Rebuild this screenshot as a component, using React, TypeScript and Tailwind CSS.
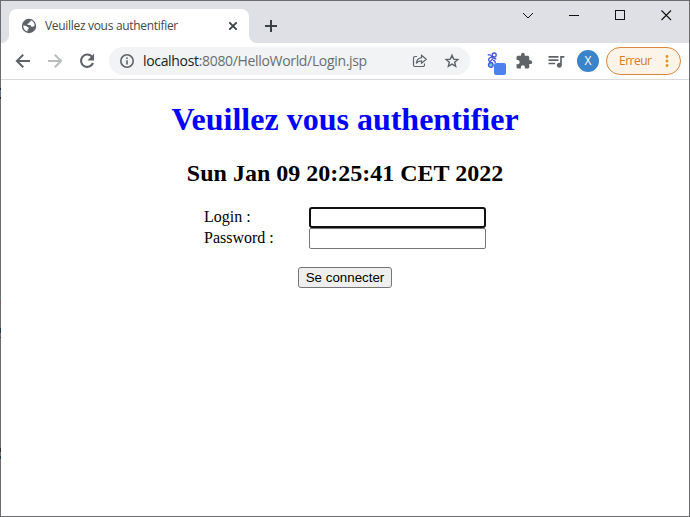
import { MdExtension, MdMoreVert, MdQueueMusic } from "react-icons/md";

function TabStrip() {
  return (
    <div className="flex h-[42px] shrink-0 items-start bg-[#dfe0e5]">
      <svg className="mt-[34px] h-2 w-2 shrink-0" viewBox="0 0 8 8" fill="#fff">
        <path d="M8 0v8H0a8 8 0 0 0 8-8Z" />
      </svg>
      <div className="mt-2 flex h-[34px] w-[240px] shrink-0 items-center rounded-t-lg bg-white pl-3 pr-2">
        <svg className="h-4 w-4 shrink-0" viewBox="0 0 16 16">
          <circle cx="8" cy="8" r="7.200" fill="#5f6368" />
          <path
            d="M9.300 2.200c.8.900.2 1.900-.9 2.100-.4 1.200-1.500 1.400-2.200 1.500.1 1 .9 1.200 2 1.100 1.500-.1 2 .8 2.100 1.900 1 .1 2.200.2 3.300-.7A5.700 5.700 0 0 0 9.300 2.200ZM2.200 7.500c1.500 0 2.800.1 3.700 1 .6.700 1.900.5 1.900 1.700-.1 1-1.300.9-1.300 1.900v1.300C4 12.900 2.200 10.700 2.200 7.500Z"
            fill="#fff"
          />
        </svg>
        <span className="ml-2 whitespace-nowrap text-[12px] tracking-[-0.31px] text-[#45474a]">
          Veuillez vous authentifier
        </span>
        <svg className="ml-auto h-4 w-4 shrink-0" viewBox="0 0 16 16" fill="none" stroke="#3c4043" strokeWidth="1.8">
          <path d="m4.300 4.300 7.400 7.400m0-7.400-7.400 7.400" />
        </svg>
      </div>
      <svg className="mt-[34px] h-2 w-2 shrink-0" viewBox="0 0 8 8" fill="#fff">
        <path d="M0 0v8h8a8 8 0 0 1-8-8Z" />
      </svg>
      <svg className="ml-1 mt-[15px] h-5 w-5" viewBox="0 0 20 20" fill="none" stroke="#3c4043" strokeWidth="2">
        <path d="M10 4v12M4 10h12" />
      </svg>
      <svg className="ml-auto mr-[14px] mt-[7px] h-4 w-[154px]" viewBox="0 0 154 16" fill="none" stroke="#111">
        <path d="M2 5 7 10 12 5" strokeWidth="1" />
        <path d="M48 7.500h10" shapeRendering="crispEdges" />
        <path d="M94.500 2.500h9v9h-9z" shapeRendering="crispEdges" />
        <path d="m140.500 2.500 9.500 9.500m0-9.500-9.500 9.500" strokeWidth="1.100" />
      </svg>
    </div>
  );
}

function Toolbar() {
  return (
    <div className="flex h-9 shrink-0 items-center bg-white pl-3 text-[#5f6368]">
      <svg className="h-5 w-5" viewBox="0 0 20 20" fill="none" stroke="#5f6368" strokeWidth="2">
        <path d="M17 10H4.500M10.200 3.700 3.900 10l6.300 6.300" />
      </svg>
      <svg className="ml-3 h-5 w-5" viewBox="0 0 20 20" fill="none" stroke="#babcbe" strokeWidth="2">
        <path d="M3 10h12.500M9.800 3.700l6.300 6.300-6.300 6.300" />
      </svg>
      <svg className="ml-3 h-5 w-5" viewBox="0 0 20 20">
        <path d="M14.800 5.500A6.200 6.200 0 1 0 16 12" fill="none" stroke="#5f6368" strokeWidth="2.100" />
        <path d="M17 2.800v6.600h-6.600Z" fill="#5f6368" />
      </svg>
      <div className="ml-3 flex h-7 w-[361px] items-center rounded-full bg-[#f1f3f4] pl-[10px] pr-[10px]">
        <svg className="h-4 w-4" viewBox="0 0 16 16" fill="none" stroke="#5f6368" strokeWidth="1.600">
          <circle cx="8" cy="8" r="6.200" />
          <path d="M8 7.200v4.300M8 4.500v1.600" />
        </svg>
        <span className="-mt-px ml-2 whitespace-nowrap text-[14px] tracking-[-0.33px] text-[#6a6e72]">
          <span className="text-[#202124]">localhost</span>:8080/HelloWorld/Login.jsp
        </span>
        <svg className="ml-auto h-4 w-4" viewBox="0 0 16 16" fill="none" stroke="#5f6368" strokeWidth="1.200">
          <path d="M5 3.500H3A1.500 1.500 0 0 0 1.500 5v7A1.500 1.500 0 0 0 3 13.500h8a1.500 1.500 0 0 0 1.500-1.500v-1.500" />
          <path d="M9.500 2.200 14.300 6.200 9.500 10.200V7.900C7 7.900 5.600 8.700 4.300 10.500c.4-3.300 2.200-5.500 5.200-5.900Z" />
        </svg>
        <svg className="ml-4 h-4 w-4" viewBox="0 0 16 16" fill="none" stroke="#5f6368" strokeWidth="1.400">
          <path d="m8 2.200 1.650 3.900 4.200.35-3.200 2.750 1 4.150L8 11.150l-3.650 2.200 1-4.150-3.200-2.750 4.200-.35Z" />
        </svg>
      </div>
      <svg className="ml-4 h-7 w-6 shrink-0" viewBox="0 0 24 28" fill="none" stroke="#4353dd" strokeWidth="1.300">
        <path d="M1.800 8.200C4 6.300 5 9 6.500 10.200c1.300 1.300 2.400 1.800 3.800 1.500" />
        <circle cx="8.200" cy="8" r="2" />
        <path d="M6.700 9.600 3.500 11c-1.400 1.200-1 3 .3 3.600L6.500 16M6.800 11.500 3.400 15.700" />
        <circle cx="4.800" cy="18" r="2.300" fill="#63d7c5" />
        <path d="M7 13.500c1.800-.2 2.300 1 2.200 2.500" />
        <rect x="8" y="16" width="12" height="12" rx="2" fill="#4d82ee" stroke="none" />
      </svg>
      <MdExtension className="ml-[5px] h-[18px] w-[18px] shrink-0" />
      <MdQueueMusic className="ml-[13px] h-5 w-5 shrink-0" />
      <span className="ml-[11px] flex h-[22px] w-[22px] shrink-0 items-center justify-center rounded-full bg-[#3c84ca] text-[12px] text-white">
        X
      </span>
      <div className="ml-[7px] flex h-7 w-[75px] shrink-0 items-center rounded-full border border-[#d9883b] bg-[#fcf3e9] pl-3 text-[#d37b25]">
        <span className="text-[12px] tracking-[-0.5px]">Erreur</span>
        <MdMoreVert className="ml-auto mr-1 h-[18px] w-[18px] text-[#e39a2b]" />
      </div>
    </div>
  );
}

function LoginPage() {
  return (
    <main className="flex flex-1 flex-col items-center bg-white font-['Liberation_Serif',serif] text-black">
      <h1 className="mt-[21px] h-[37px] whitespace-nowrap text-[32px] font-bold leading-[37px] text-[#0000ff]">
        Veuillez vous authentifier
      </h1>
      <h2 className="mt-[21px] h-7 whitespace-nowrap text-[24px] font-bold leading-7">
        Sun Jan 09 20:25:41 CET 2022
      </h2>
      <form className="mt-5 flex flex-col items-center">
        <div className="grid grid-cols-[105px_177px] grid-rows-[21px_21px] text-[16px] leading-[19px]">
          <label htmlFor="login">Login :</label>
          <input
            id="login"
            className="h-[21px] rounded-[3px] border-2 border-[#101010] bg-white px-1 outline-none"
          />
          <label htmlFor="password">Password :</label>
          <input
            id="password"
            type="password"
            className="h-[21px] rounded-[2px] border border-[#767676] bg-white px-1 outline-none"
          />
        </div>
        <button
          type="button"
          className="mt-[18px] h-[21px] w-[94px] whitespace-nowrap rounded-[3px] border border-[#767676] bg-[#efefef] font-['Liberation_Sans',sans-serif] text-[13.333px] leading-[19px]"
        >
          Se connecter
        </button>
      </form>
    </main>
  );
}

/* Traces of the desktop behind the window's left edge. */
function EdgeMarks() {
  return (
    <div className="absolute -left-px -top-px flex w-px flex-col">
      <div className="mt-[88px] h-[11px] border-y-2 border-[#28282c] bg-[#5d6f80]" />
      <div className="mt-[203px] h-px bg-[#7a4050]" />
      <div className="mt-[25px] h-[5px] bg-[#283a48]" />
      <div className="mt-[4px] h-px bg-[#304068]" />
      <div className="mt-[110px] h-[4px] bg-[#38303c]" />
      <div className="mt-[4px] h-[3px] bg-[#283a48]" />
    </div>
  );
}

export default function App() {
  return (
    <div className="relative h-[517px] w-[690px] bg-[#6d6d70] p-px font-['Open_Sans',sans-serif]">
      <div className="relative flex h-full flex-col bg-white">
        <TabStrip />
        <Toolbar />
        <div className="h-px shrink-0 bg-[#dadadc]" />
        <LoginPage />
        <EdgeMarks />
      </div>
    </div>
  );
}
